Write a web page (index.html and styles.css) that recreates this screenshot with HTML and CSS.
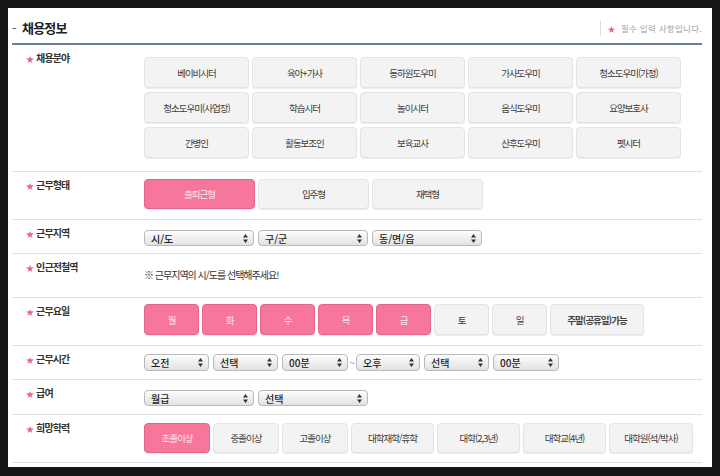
FILE: index.html
```html
<!DOCTYPE html>
<html lang="ko">
<head>
  <meta charset="UTF-8">
  <title>채용정보</title>
  <link rel="stylesheet" href="styles.css">
</head>
<body>
  <div class="panel">
    <div class="header">
      <h2 class="title"><span class="dash">-</span>채용정보</h2>
      <div class="required-note"><span class="star">★</span>필수 입력 사항입니다.</div>
    </div>

    <div class="row row-field">
      <div class="label"><span class="star">★</span>채용분야</div>
      <div class="field-grid">
        <button class="opt">베이비시터</button>
        <button class="opt">육아+가사</button>
        <button class="opt">등하원도우미</button>
        <button class="opt">가사도우미</button>
        <button class="opt">청소도우미(가정)</button>
        <button class="opt">청소도우미(사업장)</button>
        <button class="opt">학습시터</button>
        <button class="opt">놀이시터</button>
        <button class="opt">음식도우미</button>
        <button class="opt">요양보호사</button>
        <button class="opt">간병인</button>
        <button class="opt">활동보조인</button>
        <button class="opt">보육교사</button>
        <button class="opt">산후도우미</button>
        <button class="opt">펫시터</button>
      </div>
    </div>

    <div class="row row-type">
      <div class="label"><span class="star">★</span>근무형태</div>
      <div class="opts">
        <button class="opt w-type on">출퇴근형</button>
        <button class="opt w-type">입주형</button>
        <button class="opt w-type">재택형</button>
      </div>
    </div>

    <div class="row row-area">
      <div class="label"><span class="star">★</span>근무지역</div>
      <div class="opts gap4">
        <div class="select w-110">시/도<svg viewBox="0 0 5 9"><path d="M2.5 0 5 3.5H0zM2.5 9 5 5.5H0z"/></svg></div>
        <div class="select w-110">구/군<svg viewBox="0 0 5 9"><path d="M2.5 0 5 3.5H0zM2.5 9 5 5.5H0z"/></svg></div>
        <div class="select w-110">동/면/읍<svg viewBox="0 0 5 9"><path d="M2.5 0 5 3.5H0zM2.5 9 5 5.5H0z"/></svg></div>
      </div>
    </div>

    <div class="row row-note">
      <div class="label"><span class="star">★</span>인근전철역</div>
      <p class="note">※ 근무지역의 시/도를 선택해주세요!</p>
    </div>

    <div class="row row-days">
      <div class="label"><span class="star">★</span>근무요일</div>
      <div class="opts">
        <button class="opt day on">월</button>
        <button class="opt day on">화</button>
        <button class="opt day on">수</button>
        <button class="opt day on">목</button>
        <button class="opt day on">금</button>
        <button class="opt day">토</button>
        <button class="opt day">일</button>
        <button class="opt weekend">주말(공휴일)가능</button>
      </div>
    </div>

    <div class="row row-time">
      <div class="label"><span class="star">★</span>근무시간</div>
      <div class="opts gap4 time">
        <div class="select w-65">오전<svg viewBox="0 0 5 9"><path d="M2.5 0 5 3.5H0zM2.5 9 5 5.5H0z"/></svg></div>
        <div class="select w-65">선택<svg viewBox="0 0 5 9"><path d="M2.5 0 5 3.5H0zM2.5 9 5 5.5H0z"/></svg></div>
        <div class="select w-66">00분<svg viewBox="0 0 5 9"><path d="M2.5 0 5 3.5H0zM2.5 9 5 5.5H0z"/></svg></div>
        <span class="tilde">~</span>
        <div class="select w-64">오후<svg viewBox="0 0 5 9"><path d="M2.5 0 5 3.5H0zM2.5 9 5 5.5H0z"/></svg></div>
        <div class="select w-65">선택<svg viewBox="0 0 5 9"><path d="M2.5 0 5 3.5H0zM2.5 9 5 5.5H0z"/></svg></div>
        <div class="select w-66">00분<svg viewBox="0 0 5 9"><path d="M2.5 0 5 3.5H0zM2.5 9 5 5.5H0z"/></svg></div>
      </div>
    </div>

    <div class="row row-pay">
      <div class="label"><span class="star">★</span>급여</div>
      <div class="opts gap4">
        <div class="select w-110">월급<svg viewBox="0 0 5 9"><path d="M2.5 0 5 3.5H0zM2.5 9 5 5.5H0z"/></svg></div>
        <div class="select w-110">선택<svg viewBox="0 0 5 9"><path d="M2.5 0 5 3.5H0zM2.5 9 5 5.5H0z"/></svg></div>
      </div>
    </div>

    <div class="row row-edu">
      <div class="label"><span class="star">★</span>희망학력</div>
      <div class="opts">
        <button class="opt edu on">초졸이상</button>
        <button class="opt edu">중졸이상</button>
        <button class="opt edu">고졸이상</button>
        <button class="opt edu-wide">대학재학/휴학</button>
        <button class="opt edu-wide">대학(2,3년)</button>
        <button class="opt edu-wide">대학교(4년)</button>
        <button class="opt edu-wide last">대학원(석/박사)</button>
      </div>
    </div>
  </div>
</body>
</html>
```

FILE: styles.css
```css
:root {
  --pink: #f7769b;
  --pink-border: #e5648a;
  --btn-bg: #f3f3f3;
  --btn-border: #e4e4e4;
  --line: #e2e2e2;
  --head-line: #6f7f98;
  --text: #333;
}

body {
  margin: 0;
  padding: 8px;
  background: #161616;
  font-family: "Noto Sans CJK KR", "Liberation Sans", sans-serif;
  color: var(--text);
}

.panel {
  width: 690px;
  height: 459px;
  padding: 0 10px 0 4px;
  background: #fff;
  overflow: hidden;
}

.header {
  display: flex;
  justify-content: space-between;
  align-items: center;
  height: 35px;
  border-bottom: 2px solid var(--head-line);
}

.title {
  margin: 4px 0 0;
  font-size: 13px;
  font-weight: 700;
  letter-spacing: -0.8px;
  color: #222;
}

.dash {
  display: inline-block;
  width: 10px;
  font-weight: 400;
  color: #555;
}

.required-note {
  margin-top: 6px;
  padding-left: 7px;
  border-left: 1px solid #ddd;
  line-height: 14px;
  font-size: 8.5px;
  letter-spacing: 0.3px;
  color: #a0a0a0;
}

.required-note .star {
  margin-right: 5px;
}

.star {
  color: #e0648b;
  font-size: 8px;
  margin-right: 3px;
}

/* each row has a fixed height; label centred ~14px from the top */
.row {
  display: flex;
  align-items: flex-start;
  border-bottom: 1px solid var(--line);
}

.label {
  flex: none;
  width: 118px;
  padding: 6px 0 0 14px;
  line-height: 14px;
  font-size: 10px;
  font-weight: 700;
  letter-spacing: -0.9px;
  color: #333;
}

.row > :last-child {
  margin-top: var(--top);
}

.row-field { height: 126px; --top: 12px; }
.row-type  { height: 47px;  --top: 7px; }
.row-area  { height: 33px;  --top: 10px; }
.row-note  { height: 43px;  --top: 14px; }
.row-days  { height: 47px;  --top: 6px; }
.row-time  { height: 33px;  --top: 8px; }
.row-pay   { height: 34px;  --top: 10px; }
.row-edu   { height: 47px;  --top: 8px; }

.opts {
  display: flex;
  align-items: center;
  gap: 3px;
}

.gap4 {
  gap: 4px;
}

.field-grid {
  display: grid;
  grid-template-columns: repeat(5, 105px);
  grid-auto-rows: 31px;
  gap: 4px 3px;
}

.opt {
  height: 31px;
  padding: 0;
  border: 1px solid var(--btn-border);
  border-radius: 4px;
  background: var(--btn-bg);
  box-shadow: 0 1px 0 #ececec;
  font-family: inherit;
  font-size: 9.5px;
  letter-spacing: -1px;
  color: #3c3c3c;
  cursor: pointer;
}

.opt.on {
  background: var(--pink);
  border-color: var(--pink-border);
  color: #ffe6ee;
}

.w-type { width: 111px; height: 30px; }
.day { width: 55px; }
.weekend { width: 94px; font-weight: 700; color: #444; }
.edu { width: 66px; height: 30px; }
.edu-wide { width: 83px; height: 30px; }
.edu-wide.last { width: 84px; }

.select {
  display: flex;
  justify-content: space-between;
  align-items: center;
  box-sizing: border-box;
  height: 16px;
  padding: 0 5px 0 6px;
  border: 1px solid #b9b9b9;
  border-radius: 4px;
  background: linear-gradient(#fdfdfd, #e2e2e2);
  font-size: 10px;
  font-weight: 500;
  color: #222;
}

.select svg {
  width: 5px;
  height: 9px;
  fill: #333;
}

.time .select { height: 17px; }

.w-110 { width: 110px; }
.w-66 { width: 66px; }
.w-65 { width: 65px; }
.w-64 { width: 64px; }

.tilde {
  width: 2px;
  margin: 0 0 0 -2px;
  font-size: 9px;
  color: #555;
}

.note {
  margin: 0;
  line-height: 14px;
  font-size: 10px;
  letter-spacing: -1px;
  color: #333;
}
```
